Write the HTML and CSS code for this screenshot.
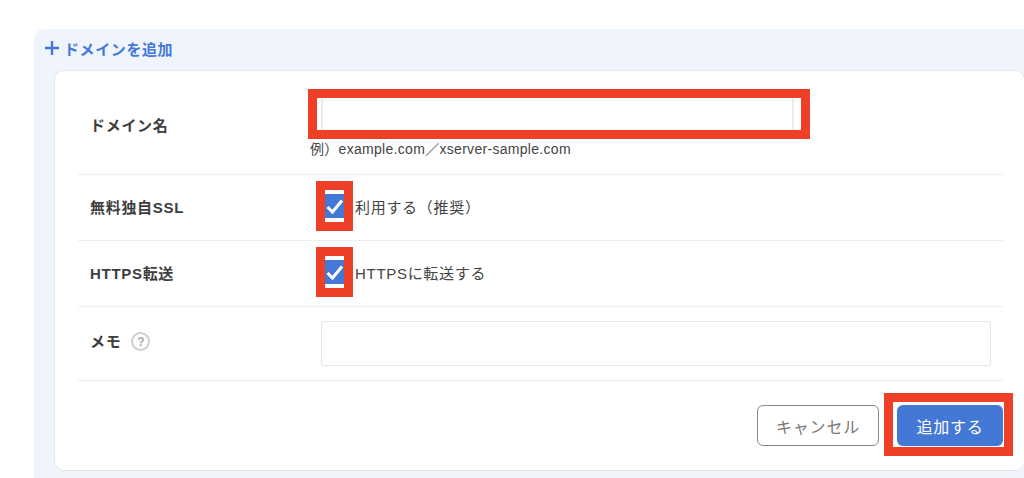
FILE: index.html
```html
<!DOCTYPE html>
<html lang="ja">
<head>
<meta charset="utf-8">
<title>ドメインを追加</title>
<link rel="stylesheet" href="styles.css">
</head>
<body>
<section class="panel">
  <h2 class="title">
    <svg class="plus" viewBox="0 0 14 14" width="14" height="14" aria-hidden="true"><path d="M7 0v14M0 7h14" fill="none" stroke="currentColor" stroke-width="2.400"/></svg>
    <span>ドメインを追加</span>
  </h2>
  <form class="card">
    <div class="row row-domain">
      <div class="label">ドメイン名</div>
      <div class="value">
        <div class="mark mark-input"><div class="input-stub"></div></div>
        <p class="hint">例）example.com／xserver-sample.com</p>
      </div>
    </div>
    <div class="row row-check">
      <div class="label">無料独自SSL</div>
      <div class="value check-line">
        <div class="mark mark-check">
          <span class="check"><svg viewBox="0 0 19 24" width="19" height="24" aria-hidden="true"><path d="M2.500 13l5 5L17 6.500" fill="none" stroke="#fff" stroke-width="3"/></svg></span>
        </div>
        <span class="check-text">利用する（推奨）</span>
      </div>
    </div>
    <div class="row row-check">
      <div class="label">HTTPS転送</div>
      <div class="value check-line">
        <div class="mark mark-check">
          <span class="check"><svg viewBox="0 0 19 24" width="19" height="24" aria-hidden="true"><path d="M2.500 13l5 5L17 6.500" fill="none" stroke="#fff" stroke-width="3"/></svg></span>
        </div>
        <span class="check-text">HTTPSに転送する</span>
      </div>
    </div>
    <div class="row row-memo">
      <div class="label">メモ <span class="help">?</span></div>
      <div class="value"><div class="memo"></div></div>
    </div>
    <div class="actions">
      <button type="button" class="btn btn-cancel">キャンセル</button>
      <div class="mark mark-btn"><button type="button" class="btn btn-submit">追加する</button></div>
    </div>
  </form>
</section>
</body>
</html>
```
FILE: styles.css
```css
* { box-sizing: border-box; }
html, body { margin: 0; height: 478px; overflow: hidden; background: #fff; }
body {
  font-family: "Liberation Sans", "Noto Sans CJK JP", sans-serif;
  color: #444;
  padding: 29px 0 0 34px;
}
.panel {
  width: 1010px;
  height: 449px;
  background: #f0f4fc;
  border-radius: 10px 0 0 0;
  padding: 0 0 0 20px;
}
.title {
  display: flex;
  align-items: center;
  gap: 5px;
  height: 41px;
  margin: 0 0 0 -9px;
  padding-bottom: 3px;
  font-size: 15px;
  font-weight: 700;
  letter-spacing: .6px;
  color: #4478d6;
}
.plus { flex: none; }
.card {
  width: 971px;
  height: 401px;
  background: #fff;
  border: 1px solid #e6e6e6;
  border-radius: 10px;
  padding: 0 21px 0 23px;
}
.row {
  display: flex;
  border-bottom: 1px solid #eeeeee;
}
.label {
  width: 230px;
  flex: none;
  padding-left: 12px;
  font-size: 15px;
  font-weight: 700;
  letter-spacing: .7px;
  color: #3d3d3d;
  display: flex;
  align-items: center;
}
.value { flex: 1; min-width: 0; }
.row-domain { height: 104px; padding-top: 18px; }
.row-domain .label { height: 70px; }
.row-check { height: 66px; }
.row-check .label { padding-bottom: 3px; }
.row-memo { height: 74px; }
.row-memo .label { padding-bottom: 6px; }
.mark { border: 9px solid #ee4026; }
.mark-input {
  width: 502px;
  height: 50px;
  padding: 0 7px 0 4px;
}
.input-stub {
  height: 100%;
  border-left: 2px solid #ececec;
  border-right: 2px solid #ececec;
}
.hint {
  margin: 1px 0 0 2px;
  font-size: 14px;
  line-height: 18px;
  letter-spacing: .3px;
  color: #444;
}
.check-line {
  display: flex;
  align-items: center;
  padding-left: 8px;
  padding-bottom: 3px;
  gap: 2px;
}
.mark-check {
  width: 37px;
  height: 50px;
  display: flex;
  align-items: center;
  background: #fff;
}
.check {
  display: block;
  width: 19px;
  height: 24px;
  background: #4478d6;
}
.check svg { display: block; }
.check-text { font-size: 15px; letter-spacing: .7px; color: #444; }
.help {
  display: inline-flex;
  align-items: center;
  justify-content: center;
  width: 19px;
  height: 19px;
  margin-left: 10px;
  margin-top: 2px;
  border: 2px solid #cfcfcf;
  border-radius: 50%;
  font-size: 12px;
  font-weight: 700;
  letter-spacing: 0;
  color: #aaa;
}
.row-memo .value { padding: 14px 0 0 13px; }
.memo {
  width: 670px;
  height: 45px;
  border: 1px solid #e6e6e6;
  border-radius: 3px;
}
.actions {
  display: flex;
  justify-content: flex-end;
  padding-top: 12px;
  margin-right: -10px;
}
.btn {
  font: inherit;
  font-size: 16px;
  letter-spacing: .8px;
  height: 41px;
  border-radius: 6px;
  cursor: pointer;
}
.btn-cancel {
  width: 122px;
  margin: 12px 5px 0 0;
  background: #fff;
  border: 1px solid #8a8a8a;
  color: #777;
}
.mark-btn {
  width: 129px;
  height: 63px;
  padding: 3px 1px 0 4px;
}
.btn-submit {
  width: 106px;
  background: #4478d6;
  border: 0;
  color: #fff;
}
```
